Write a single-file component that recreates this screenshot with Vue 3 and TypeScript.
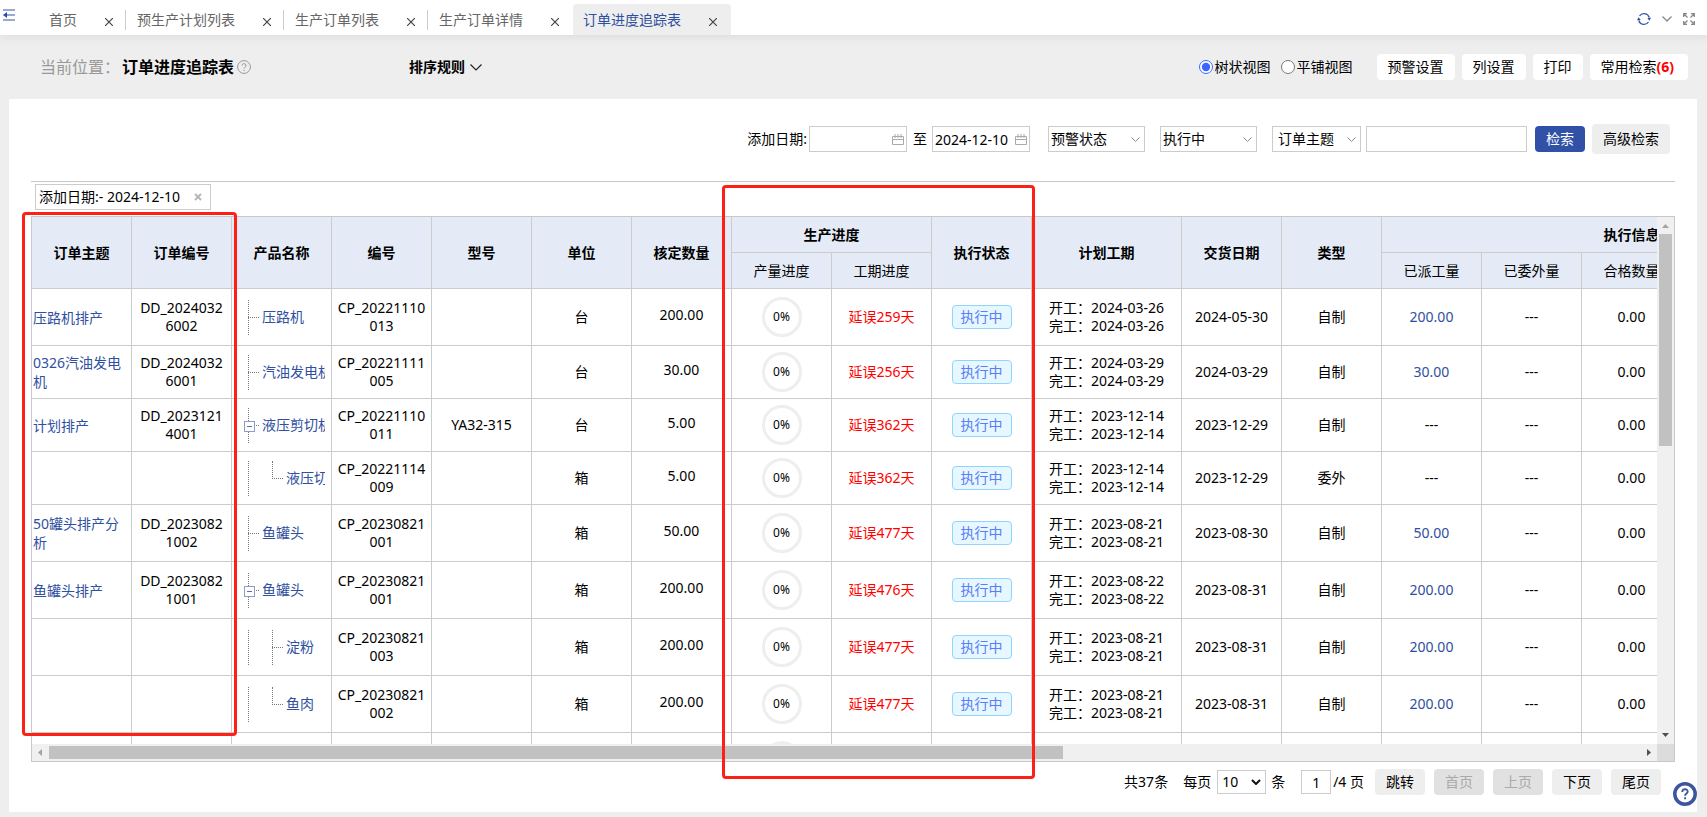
<script setup lang="ts">
import { ref } from 'vue'

interface Tab {
  label: string
  active?: boolean
}

interface Row {
  title: string
  orderNo: string
  product: string
  level: 0 | 1
  node: 'leaf' | 'open' | 'last'
  code: string
  model: string
  unit: string
  qty: string
  delay: string
  start: string
  end: string
  due: string
  kind: string
  assigned: string
  tall: boolean
}

const tabs: Tab[] = [
  { label: '首页' },
  { label: '预生产计划列表' },
  { label: '生产订单列表' },
  { label: '生产订单详情' },
  { label: '订单进度追踪表', active: true },
]

const rows: Row[] = [
  { title: '压路机排产', orderNo: 'DD_20240326002', product: '压路机', level: 0, node: 'leaf', code: 'CP_20221110013', model: '', unit: '台', qty: '200.00', delay: '延误259天', start: '2024-03-26', end: '2024-03-26', due: '2024-05-30', kind: '自制', assigned: '200.00', tall: true },
  { title: '0326汽油发电机', orderNo: 'DD_20240326001', product: '汽油发电机', level: 0, node: 'leaf', code: 'CP_20221111005', model: '', unit: '台', qty: '30.00', delay: '延误256天', start: '2024-03-29', end: '2024-03-29', due: '2024-03-29', kind: '自制', assigned: '30.00', tall: false },
  { title: '计划排产', orderNo: 'DD_20231214001', product: '液压剪切机', level: 0, node: 'open', code: 'CP_20221110011', model: 'YA32-315', unit: '台', qty: '5.00', delay: '延误362天', start: '2023-12-14', end: '2023-12-14', due: '2023-12-29', kind: '自制', assigned: '', tall: false },
  { title: '', orderNo: '', product: '液压切机', level: 1, node: 'last', code: 'CP_20221114009', model: '', unit: '箱', qty: '5.00', delay: '延误362天', start: '2023-12-14', end: '2023-12-14', due: '2023-12-29', kind: '委外', assigned: '', tall: false },
  { title: '50罐头排产分析', orderNo: 'DD_20230821002', product: '鱼罐头', level: 0, node: 'leaf', code: 'CP_20230821001', model: '', unit: '箱', qty: '50.00', delay: '延误477天', start: '2023-08-21', end: '2023-08-21', due: '2023-08-30', kind: '自制', assigned: '50.00', tall: true },
  { title: '鱼罐头排产', orderNo: 'DD_20230821001', product: '鱼罐头', level: 0, node: 'open', code: 'CP_20230821001', model: '', unit: '箱', qty: '200.00', delay: '延误476天', start: '2023-08-22', end: '2023-08-22', due: '2023-08-31', kind: '自制', assigned: '200.00', tall: true },
  { title: '', orderNo: '', product: '淀粉', level: 1, node: 'leaf', code: 'CP_20230821003', model: '', unit: '箱', qty: '200.00', delay: '延误477天', start: '2023-08-21', end: '2023-08-21', due: '2023-08-31', kind: '自制', assigned: '200.00', tall: true },
  { title: '', orderNo: '', product: '鱼肉', level: 1, node: 'last', code: 'CP_20230821002', model: '', unit: '箱', qty: '200.00', delay: '延误477天', start: '2023-08-21', end: '2023-08-21', due: '2023-08-31', kind: '自制', assigned: '200.00', tall: true },
]

const view = ref('tree')
const dateFrom = ref('')
const dateTo = ref('2024-12-10')
const keyword = ref('')
const page = ref('1')
const pageSize = ref('10')
</script>

<template>
  <div class="page">
    <header class="topbar">
      <button class="icon-btn collapse" aria-label="收起菜单">
        <svg width="12" height="12" viewBox="0 0 12 12">
          <path d="M0 1h12M6 6h6M0 11h12" stroke="#9aa8d6" stroke-width="2" />
          <path d="M0 6l4-3v6z" fill="#2b4baa" />
          <path d="M3 6h3" stroke="#2b4baa" stroke-width="1" />
        </svg>
      </button>
      <nav class="tabs">
        <div v-for="tab in tabs" :key="tab.label" class="tab" :class="{ active: tab.active }">
          <a href="#">{{ tab.label }}</a>
          <button class="icon-btn tab-close" aria-label="关闭">
            <svg width="8" height="8" viewBox="0 0 8 8"><path d="M0 0l8 8M8 0L0 8" stroke="#444" stroke-width="1.2" /></svg>
          </button>
        </div>
      </nav>
      <div class="top-tools">
        <button class="icon-btn" aria-label="刷新">
          <svg width="14" height="14" viewBox="0 0 14 14" fill="none">
            <path d="M1.800 8.500A5.400 5.400 0 0 0 11.500 10M12.200 5.500A5.400 5.400 0 0 0 2.500 4" stroke="#3c57a8" stroke-width="1.3" />
            <path d="M0 8.300l1.600-3 2 2.800zM14 5.700l-1.600 3-2-2.800z" fill="#2b4baa" />
          </svg>
        </button>
        <button class="icon-btn" aria-label="更多">
          <svg width="10" height="6" viewBox="0 0 10 6" fill="none"><path d="M.5.5L5 5 9.500.5" stroke="#888" stroke-width="1.3" /></svg>
        </button>
        <button class="icon-btn" aria-label="全屏">
          <svg width="12" height="12" viewBox="0 0 12 12" fill="none" stroke="#888" stroke-width="1.3">
            <path d="M.7 4V.7H4M8 .7h3.300V4M11.300 8v3.300H8M4 11.300H.7V8M1 1l3.500 3.500M11 1L7.500 4.500M11 11L7.500 7.500M1 11l3.500-3.500" />
          </svg>
        </button>
      </div>
    </header>

    <section class="titlebar">
      <span class="crumb">当前位置：</span>
      <h1>订单进度追踪表</h1>
      <svg class="hint" width="14" height="14" viewBox="0 0 14 14" fill="none" stroke="#999">
        <circle cx="7" cy="7" r="6.400" />
        <path d="M5 5.600a2 2 0 1 1 2.700 1.900Q7 7.800 7 8.600M7 9.800v1.200" />
      </svg>
      <button class="sort">
        排序规则
        <svg width="12" height="7" viewBox="0 0 12 7" fill="none"><path d="M.5.5L6 6 11.500.5" stroke="#222" stroke-width="1.2" /></svg>
      </button>
      <div class="actions">
        <label class="radio"><input v-model="view" type="radio" name="view" value="tree" />树状视图</label>
        <label class="radio"><input v-model="view" type="radio" name="view" value="flat" />平铺视图</label>
        <div class="btns">
          <button class="btn white">预警设置</button>
          <button class="btn white">列设置</button>
          <button class="btn white">打印</button>
          <button class="btn white last">常用检索<b>(6)</b></button>
        </div>
      </div>
    </section>

    <main class="panel">
      <form class="filters" @submit.prevent>
        <label for="date-from">添加日期:</label>
        <span class="date">
          <input id="date-from" v-model="dateFrom" type="text" />
          <svg width="12" height="11" viewBox="0 0 12 11" fill="none" stroke="#aaa"><path d="M.5 2.500h11v8H.5zM0 5.500h12M3 0v4M6 0v4M9 0v4" /></svg>
        </span>
        <label class="to" for="date-to">至</label>
        <span class="date">
          <input id="date-to" v-model="dateTo" type="text" />
          <svg width="12" height="11" viewBox="0 0 12 11" fill="none" stroke="#aaa"><path d="M.5 2.500h11v8H.5zM0 5.500h12M3 0v4M6 0v4M9 0v4" /></svg>
        </span>
        <span class="pick first">
          <select aria-label="预警状态"><option>预警状态</option></select>
          <svg width="9" height="5" viewBox="0 0 9 5" fill="none"><path d="M.5.5l4 4 4-4" stroke="#888" /></svg>
        </span>
        <span class="pick">
          <select aria-label="执行状态"><option>执行中</option></select>
          <svg width="9" height="5" viewBox="0 0 9 5" fill="none"><path d="M.5.5l4 4 4-4" stroke="#888" /></svg>
        </span>
        <span class="pick field">
          <select aria-label="检索字段"><option>订单主题</option></select>
          <svg width="9" height="5" viewBox="0 0 9 5" fill="none"><path d="M.5.5l4 4 4-4" stroke="#888" /></svg>
        </span>
        <input v-model="keyword" class="keyword" type="text" aria-label="关键字" />
        <button class="btn primary">检索</button>
        <button class="btn grey tall" type="button">高级检索</button>
      </form>

      <div class="chips">
        <span class="chip">添加日期:- 2024-12-10
          <button class="icon-btn" aria-label="移除">
            <svg width="8" height="8" viewBox="0 0 8 8"><path d="M1 1l6 6M7 1L1 7" stroke="#b5b5b5" stroke-width="1.800" /></svg>
          </button>
        </span>
      </div>

      <div class="grid-box">
        <div class="viewport">
          <table>
            <colgroup>
              <col v-for="n in 10" :key="n" class="col" />
              <col class="col-wide" />
              <col v-for="n in 7" :key="n" class="col" />
            </colgroup>
            <thead>
              <tr>
                <th rowspan="2">订单主题</th>
                <th rowspan="2">订单编号</th>
                <th rowspan="2">产品名称</th>
                <th rowspan="2">编号</th>
                <th rowspan="2">型号</th>
                <th rowspan="2">单位</th>
                <th rowspan="2">核定数量</th>
                <th colspan="2">生产进度</th>
                <th rowspan="2">执行状态</th>
                <th rowspan="2">计划工期</th>
                <th rowspan="2">交货日期</th>
                <th rowspan="2">类型</th>
                <th colspan="5">执行信息</th>
              </tr>
              <tr class="sub">
                <th>产量进度</th>
                <th>工期进度</th>
                <th>已派工量</th>
                <th>已委外量</th>
                <th>合格数量</th>
                <th></th>
                <th></th>
              </tr>
            </thead>
            <tbody>
              <tr v-for="(row, i) in rows" :key="i" :class="{ tall: row.tall }">
                <td class="title"><a v-if="row.title" href="#">{{ row.title }}</a></td>
                <td>{{ row.orderNo }}</td>
                <td class="tree-cell">
                  <div class="tree">
                    <i v-if="row.level === 1" class="rail"></i>
                    <i class="rail branch" :class="row.node"></i>
                    <a href="#">{{ row.product }}</a>
                  </div>
                </td>
                <td>{{ row.code }}</td>
                <td>{{ row.model }}</td>
                <td>{{ row.unit }}</td>
                <td class="qty">{{ row.qty }}</td>
                <td><span class="ring">0%</span></td>
                <td class="late">{{ row.delay }}</td>
                <td><span class="status">执行中</span></td>
                <td>开工：{{ row.start }}<br />完工：{{ row.end }}</td>
                <td>{{ row.due }}</td>
                <td>{{ row.kind }}</td>
                <td><a v-if="row.assigned" href="#">{{ row.assigned }}</a><template v-else>---</template></td>
                <td>---</td>
                <td>0.00</td>
                <td></td>
                <td></td>
              </tr>
              <tr class="tall">
                <td></td>
                <td></td>
                <td class="tree-cell"><div class="tree"><i class="rail"></i></div></td>
                <td></td>
                <td></td>
                <td></td>
                <td></td>
                <td><span class="ring"></span></td>
                <td v-for="n in 10" :key="n"></td>
              </tr>
            </tbody>
          </table>
        </div>
        <div class="vbar">
          <svg width="7" height="4" viewBox="0 0 7 4"><path d="M0 4L3.500 0 7 4z" fill="#a3a3a3" /></svg>
          <div class="track"><div class="thumb"></div></div>
          <svg width="7" height="4" viewBox="0 0 7 4"><path d="M0 0l3.500 4L7 0z" fill="#505050" /></svg>
        </div>
        <div class="hbar">
          <svg width="4" height="7" viewBox="0 0 4 7"><path d="M4 0L0 3.500 4 7z" fill="#a3a3a3" /></svg>
          <div class="track"><div class="thumb"></div></div>
          <svg width="4" height="7" viewBox="0 0 4 7"><path d="M0 0l4 3.500L0 7z" fill="#505050" /></svg>
        </div>
        <div class="corner"></div>
      </div>

      <footer class="pager">
        <span class="total">共37条</span>
        <label for="size">每页</label>
        <span class="size">
          <select id="size" v-model="pageSize"><option>10</option><option>20</option></select>
          <svg width="10" height="6" viewBox="0 0 10 6" fill="none"><path d="M1 1l4 4 4-4" stroke="#111" stroke-width="2" /></svg>
        </span>
        <span class="unit">条</span>
        <input v-model="page" type="text" aria-label="页码" />
        <span class="of">/4 页</span>
        <div class="pages">
          <button class="btn grey">跳转</button>
          <button class="btn grey" disabled>首页</button>
          <button class="btn grey" disabled>上页</button>
          <button class="btn grey">下页</button>
          <button class="btn grey">尾页</button>
        </div>
      </footer>

      <div class="mark mark-order"></div>
      <div class="mark mark-progress"></div>
      <button class="icon-btn help" aria-label="帮助">
        <svg width="24" height="24" viewBox="0 0 24 24" fill="none">
          <circle cx="12" cy="12" r="10.200" fill="#fff" stroke="#3b559f" stroke-width="3.500" />
          <path d="M9.300 9.900c0-3.800 5.600-3.300 5.400-.2-.1 1.800-2.600 1.900-2.600 4M12.100 15.300v2" stroke="#3b559f" stroke-width="1.900" />
        </svg>
      </button>
    </main>
  </div>
</template>

<style>
body {
  margin: 0;
}
</style>

<style scoped>
.page {
  display: flex;
  flex-direction: column;
  height: 100vh;
  min-height: 600px;
  background: #eee;
  color: #000;
  font: 14px/18px "Noto Sans", "Noto Sans CJK SC", sans-serif;
}
.page * {
  box-sizing: border-box;
}
button,
input,
select {
  font: inherit;
  color: inherit;
  margin: 0;
}
button {
  cursor: pointer;
}
a {
  color: #2f4f9f;
  text-decoration: none;
}
svg {
  display: block;
  flex: none;
}
.icon-btn {
  display: flex;
  padding: 0;
  border: 0;
  background: none;
}

.topbar {
  display: flex;
  flex: none;
  height: 35px;
  padding: 0 12px 0 3px;
  background: #fff;
  box-shadow: 0 2px 10px rgba(0, 0, 0, 0.08);
}
.collapse {
  margin-top: 9px;
  align-self: flex-start;
}
.tabs {
  display: flex;
  flex: 1;
  margin-left: 22px;
  padding-top: 4px;
}
.tab {
  position: relative;
  display: flex;
  align-items: center;
  gap: 28px;
  padding: 0 12px;
}
.tab a {
  color: #666;
}
.tab-close {
  margin-top: 5px;
}
.tab:not(:nth-last-child(-n + 2))::after {
  content: "";
  position: absolute;
  right: -1px;
  top: 6px;
  height: 20px;
  border-right: 1px solid #ccc;
}
.tab.active {
  margin-left: 2px;
  padding: 0 14px 0 10px;
  background: #eee;
  border-radius: 4px 4px 0 0;
}
.tab.active a {
  color: #2f4f9f;
}
.top-tools {
  display: flex;
  align-items: center;
  gap: 11px;
  padding-top: 3px;
}

.titlebar {
  display: flex;
  flex: none;
  align-items: center;
  height: 64px;
  padding: 0 19px 0 40px;
}
.crumb {
  width: 82px;
  font-size: 16px;
  color: #999;
  white-space: nowrap;
}
h1 {
  margin: 0;
  font-size: 16px;
  line-height: 18px;
  font-weight: 700;
}
.hint {
  margin-left: 3px;
}
.sort {
  display: flex;
  align-items: center;
  gap: 5px;
  margin-left: 158px;
  padding: 0;
  border: 0;
  background: none;
  font-weight: 700;
}
.actions {
  display: flex;
  align-items: center;
  margin-left: auto;
}
.radio {
  display: flex;
  align-items: center;
  gap: 2px;
  margin-right: 10px;
}
.radio input {
  width: 14px;
  height: 14px;
  accent-color: #3b66ff;
}
.btns {
  display: flex;
  gap: 7px;
  margin-left: 14px;
}
.btn {
  height: 26px;
  padding: 0 11px;
  border: 0;
  border-radius: 4px;
  white-space: nowrap;
}
.white {
  background: #fff;
}
.white.last {
  padding-right: 14px;
}
.white b {
  color: #f00;
}
.grey {
  background: #eee;
}
.tall.btn {
  height: 30px;
}
.primary {
  background: #3151a6;
  color: #fff;
}

.panel {
  position: relative;
  display: flex;
  flex: 1;
  flex-direction: column;
  min-height: 0;
  margin: 0 10px 5px 9px;
  background: #fff;
}
.filters {
  display: flex;
  flex: none;
  align-items: center;
  justify-content: flex-end;
  height: 82px;
  padding: 0 27px 2px 0;
}
.date,
.pick,
.size {
  position: relative;
  display: flex;
}
input[type="text"],
select {
  height: 26px;
  padding: 0 2px;
  border: 1px solid #ccc;
  border-radius: 0;
  background: #fff;
  outline: 0;
}
select {
  appearance: none;
}
.date {
  margin-left: 2px;
}
.date input {
  width: 98px;
}
.date svg {
  position: absolute;
  right: 3px;
  top: 8px;
}
.to {
  margin: 0 3px 0 6px;
}
.pick {
  margin-left: 15px;
}
.pick.first {
  margin-left: 18px;
}
.pick select {
  width: 97px;
}
.pick.field select {
  width: 89px;
  padding-left: 5px;
}
.pick svg {
  position: absolute;
  right: 5px;
  top: 11px;
}
.keyword {
  width: 161px;
  margin: 0 8px 0 5px;
}
.primary {
  margin-right: 7px;
}

.chips {
  flex: none;
  margin: 0 22px;
  padding: 2px 4px 6px;
  border-top: 1px solid #c8c8c8;
}
.chip {
  display: inline-flex;
  align-items: center;
  gap: 14px;
  height: 26px;
  padding: 0 8px 0 3px;
  border: 1px solid #ccc;
  vertical-align: top;
}

.grid-box {
  display: grid;
  flex: 1;
  grid-template: minmax(0, 1fr) 17px / minmax(0, 1fr) 17px;
  min-height: 0;
  margin: 0 22px;
  border: 1px solid #c8c8c8;
}
.viewport {
  overflow: auto;
  scrollbar-width: none;
}
table {
  width: 1850px;
  table-layout: fixed;
  border-collapse: separate;
  border-spacing: 0;
}
.col {
  width: 100px;
}
.col-wide {
  width: 150px;
}
th,
td {
  padding: 0 5px;
  border: 0 solid #ccc;
  border-width: 0 1px 1px 0;
  text-align: center;
  overflow: hidden;
}
th {
  height: 36px;
  background: #e4ebf6;
}
.sub th {
  font-weight: 400;
}
td {
  height: 53px;
  word-break: break-all;
}
tr.tall td {
  height: 57px;
}
td.title {
  padding: 0 2px 0 1px;
  text-align: left;
  line-height: 19px;
}
td.qty {
  padding-bottom: 4px;
}
td.late {
  color: #f00;
}
td.tree-cell {
  padding: 0 6px 0 16px;
}
.tree {
  display: flex;
  align-items: center;
  height: 35px;
  overflow: hidden;
  white-space: nowrap;
}
.rail {
  position: relative;
  flex: none;
  width: 24px;
  height: 35px;
}
.rail.branch {
  width: 14px;
}
.rail::before {
  content: "";
  position: absolute;
  left: 0;
  top: 0;
  height: 100%;
  border-left: 1px dotted #777;
}
.rail.last::before {
  height: 18px;
}
.rail.branch::after {
  content: "";
  position: absolute;
  left: 0;
  top: 17px;
  width: 11px;
  border-top: 1px dotted #777;
}
.rail.open {
  width: 18px;
  margin-left: -4px;
  background: repeating-linear-gradient(90deg, #777 0 1px, transparent 1px 2px) 10px 17px / 5px 1px no-repeat;
}
.rail.open::before {
  left: 4px;
}
.rail.open::after {
  top: 13px;
  width: 9px;
  height: 9px;
  border: 1px solid #8d9cc9;
  background: linear-gradient(#5c6fae, #5c6fae) center / 5px 1px no-repeat #fff;
}
.tree:has(.open) {
  margin-left: -4px;
  padding-left: 4px;
}
.ring {
  display: inline-flex;
  align-items: center;
  justify-content: center;
  width: 40px;
  height: 40px;
  border: 3px solid #eee;
  border-radius: 50%;
  font-size: 12px;
  vertical-align: middle;
}
.status {
  display: inline-block;
  width: 60px;
  border: 1px solid #91d5ff;
  border-radius: 4px;
  background: #e6f7ff;
  color: #597ef7;
  line-height: 22px;
}

.vbar,
.hbar {
  display: flex;
  align-items: center;
  background: #f0f0f0;
}
.vbar {
  flex-direction: column;
  padding: 7px 0;
}
.hbar {
  padding: 0 6px;
}
.track {
  flex: 1;
  align-self: stretch;
}
.vbar .track {
  margin: 6px 2px;
}
.hbar .track {
  margin: 2px 7px;
}
.thumb {
  background: #c1c1c1;
}
.vbar .thumb {
  height: 43%;
}
.hbar .thumb {
  width: calc(64% - 4px);
  height: 100%;
}
.corner {
  background: #dcdcdc;
}

.pager {
  display: flex;
  flex: none;
  align-items: center;
  justify-content: flex-end;
  height: 50px;
  padding: 0 36px 10px 0;
}
.total {
  margin-right: 15px;
}
.size {
  margin: 0 5px 0 6px;
}
.size select {
  width: 49px;
  height: 24px;
  padding-left: 4px;
}
.size svg {
  position: absolute;
  right: 5px;
  top: 9px;
}
.unit {
  margin-right: 16px;
}
.pager input {
  width: 30px;
  height: 24px;
  text-align: center;
}
.of {
  margin: 0 11px 0 2px;
}
.pages {
  display: flex;
  gap: 9px;
}
.pages .btn:disabled {
  background: #e1e1e1;
  color: #aaa;
}

.mark {
  position: absolute;
  border: 3px solid #ff2015;
  border-radius: 4px;
  pointer-events: none;
}
.mark-order {
  left: 13px;
  top: 113px;
  width: 215px;
  bottom: 76px;
}
.mark-progress {
  left: 713px;
  top: 86px;
  width: 313px;
  bottom: 33px;
}
.help {
  position: absolute;
  right: 0;
  bottom: 6px;
}
</style>
